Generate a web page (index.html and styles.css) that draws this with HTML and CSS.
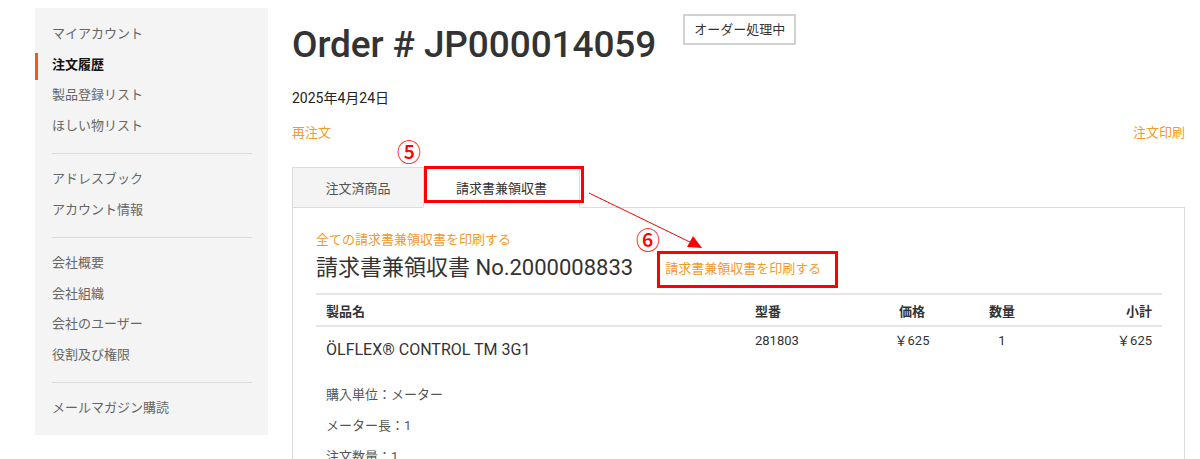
FILE: index.html
```html
<!DOCTYPE html>
<html lang="ja">
<head>
<meta charset="utf-8">
<title>Order # JP000014059</title>
<link rel="stylesheet" href="styles.css">
</head>
<body>
<div class="page">
  <aside class="sidebar">
    <ul class="nav">
      <li>マイアカウント</li>
      <li class="active">注文履歴</li>
      <li>製品登録リスト</li>
      <li>ほしい物リスト</li>
    </ul>
    <hr class="nav-sep">
    <ul class="nav">
      <li>アドレスブック</li>
      <li>アカウント情報</li>
    </ul>
    <hr class="nav-sep">
    <ul class="nav">
      <li>会社概要</li>
      <li>会社組織</li>
      <li>会社のユーザー</li>
      <li>役割及び権限</li>
    </ul>
    <hr class="nav-sep">
    <ul class="nav">
      <li>メールマガジン購読</li>
    </ul>
  </aside>

  <main class="main">
    <div class="order-head">
      <h1 class="order-title">Order # JP000014059</h1>
      <span class="status">オーダー処理中</span>
    </div>
    <p class="order-date">2025年4月24日</p>
    <div class="order-actions">
      <a class="link">再注文</a>
      <a class="link">注文印刷</a>
    </div>

    <div class="tabs">
      <div class="tab">注文済商品</div>
      <div class="tab tab-active">請求書兼領収書</div>
    </div>
    <section class="panel">
      <a class="link print-all">全ての請求書兼領収書を印刷する</a>
      <div class="invoice-head">
        <h2 class="invoice-title">請求書兼領収書 No.2000008833</h2>
        <a class="link invoice-print">請求書兼領収書を印刷する</a>
      </div>
      <table class="items">
        <colgroup>
          <col class="c-name"><col class="c-sku"><col class="c-price"><col class="c-qty"><col class="c-sub">
        </colgroup>
        <thead>
          <tr>
            <th class="t-left">製品名</th>
            <th class="t-left">型番</th>
            <th class="t-center">価格</th>
            <th class="t-center">数量</th>
            <th class="t-right">小計</th>
          </tr>
        </thead>
        <tbody>
          <tr>
            <td class="t-left">
              <div class="prod-name">ÖLFLEX® CONTROL TM 3G1</div>
              <p class="prod-opt">購入単位：メーター</p>
              <p class="prod-opt">メーター長：1</p>
              <p class="prod-opt">注文数量：1</p>
            </td>
            <td class="t-left">281803</td>
            <td class="t-center muted">￥625</td>
            <td class="t-center">1</td>
            <td class="t-right muted">￥625</td>
          </tr>
        </tbody>
      </table>
    </section>
  </main>
</div>

<div class="annot">
  <div class="annot-box box-5"></div>
  <div class="annot-num num-5">⑤</div>
  <div class="annot-box box-6"></div>
  <div class="annot-num num-6">⑥</div>
  <svg class="annot-arrow" width="1200" height="459" viewBox="0 0 1200 459">
    <line x1="589" y1="193" x2="694" y2="244" stroke="#ff0000" stroke-width="1"/>
    <polygon points="702,248 687,247 693,236" fill="#ff0000"/>
  </svg>
</div>
</body>
</html>
```

FILE: styles.css
```css
* { box-sizing: border-box; }

html, body {
  margin: 0;
  padding: 0;
  background: #fff;
}

body {
  font-family: "Roboto", "Noto Sans CJK JP", sans-serif;
  color: #333;
  font-size: 13px;
  position: relative;
  width: 1200px;
  height: 459px;
  overflow: hidden;
}

.page {
  display: flex;
  align-items: flex-start;
  gap: 24px;
  padding: 8px 15px 0 35px;
}

/* Sidebar */
.sidebar {
  width: 233px;
  flex: none;
  background: #f4f4f4;
  padding: 11px 16px 11px 17px;
}

.nav {
  list-style: none;
  margin: 0;
  padding: 0;
}

.nav li {
  position: relative;
  line-height: 30.5px;
  height: 30.5px;
  font-size: 13px;
  color: #666;
  white-space: nowrap;
}

.nav li.active {
  color: #111;
  font-weight: 700;
}

.nav li.active::before {
  content: "";
  position: absolute;
  left: -17px;
  top: 3px;
  width: 3px;
  height: 27px;
  background: #f05a22;
}

.nav-sep {
  border: 0;
  border-top: 1px solid #dcdcdc;
  margin: 12px 0 10px;
  height: 0;
}

/* Main */
.main {
  flex: 1;
  min-width: 0;
}

.order-head {
  display: flex;
  align-items: flex-start;
  gap: 27px;
}

.order-title {
  margin: 14px 0 0;
  font-size: 37px;
  line-height: 46px;
  font-weight: 500;
  color: #333;
  letter-spacing: -0.1px;
}

.status {
  margin-top: 6px;
  display: inline-block;
  border: 2px solid #d2d2d2;
  padding: 0 9px;
  height: 31px;
  line-height: 27px;
  font-size: 13px;
  color: #333;
}

.order-date {
  margin: 20px 0 0;
  font-size: 14px;
  line-height: 20px;
  color: #222;
}

.link {
  color: #f39a2a;
  text-decoration: none;
  font-size: 13px;
}

.order-actions {
  margin-top: 15px;
  display: flex;
  justify-content: space-between;
  line-height: 20px;
}

/* Tabs */
.tabs {
  margin-top: 24px;
  display: flex;
  position: relative;
  z-index: 1;
}

.tab {
  height: 41px;
  margin-bottom: -1px;
  border: 1px solid #dcdcdc;
  background: #f4f4f4;
  color: #555;
  font-size: 13px;
  display: flex;
  align-items: center;
  justify-content: center;
  width: 132px;
}

.tab-active {
  width: 157px;
  margin-left: -1px;
  background: #fff;
  color: #333;
  border-bottom-color: #fff;
}

.panel {
  border: 1px solid #dcdcdc;
  border-bottom: 0;
  padding: 23px 23px 0;
  height: 260px;
}

.print-all {
  display: block;
  line-height: 18px;
}

.invoice-head {
  margin-top: 5px;
  display: flex;
  align-items: center;
  gap: 32px;
}

.invoice-title {
  margin: 0;
  font-size: 22px;
  line-height: 28px;
  font-weight: 400;
  color: #333;
}

.invoice-print {
  line-height: 18px;
  padding-top: 2px;
}

/* Table */
.items {
  margin-top: 11px;
  width: 846px;
  border-collapse: collapse;
  table-layout: fixed;
}

.c-name { width: 429px; }
.c-sku { width: 125px; }
.c-price { width: 84px; }
.c-qty { width: 96px; }
.c-sub { width: 112px; }

.items thead tr {
  border-top: 2px solid #e6e6e6;
  border-bottom: 2px solid #e6e6e6;
}

.items th {
  height: 32px;
  padding: 0 10px;
  font-size: 13px;
  font-weight: 700;
  color: #333;
  vertical-align: middle;
}

.items td {
  padding: 5px 10px 0;
  font-size: 13px;
  line-height: 18px;
  vertical-align: top;
  color: #333;
}

.t-left { text-align: left; }
.t-center { text-align: center; }
.t-right { text-align: right; }

.muted { color: #777; }

.prod-name {
  margin-top: 7px;
  font-size: 16px;
  line-height: 22px;
  color: #333;
}

.prod-opt {
  margin: 13px 0 0;
  font-size: 13px;
  line-height: 18px;
  color: #555;
}

.prod-name + .prod-opt {
  margin-top: 25px;
}

/* Annotations (overlay) */
.annot {
  position: absolute;
  left: 0;
  top: 0;
  width: 1200px;
  height: 459px;
  pointer-events: none;
  z-index: 5;
}

.annot-box {
  position: absolute;
  border: 3px solid #ff0000;
}

.box-5 {
  left: 424px;
  top: 166px;
  width: 160px;
  height: 37px;
}

.box-6 {
  left: 657px;
  top: 251px;
  width: 181px;
  height: 37px;
}

.annot-num {
  position: absolute;
  color: #ff0000;
  font-family: "Noto Sans CJK JP", sans-serif;
  font-size: 24px;
  line-height: 24px;
  font-weight: 500;
}

.num-5 { left: 397px; top: 139px; }
.num-6 { left: 636px; top: 227px; }

.annot-arrow {
  position: absolute;
  left: 0;
  top: 0;
}
```
